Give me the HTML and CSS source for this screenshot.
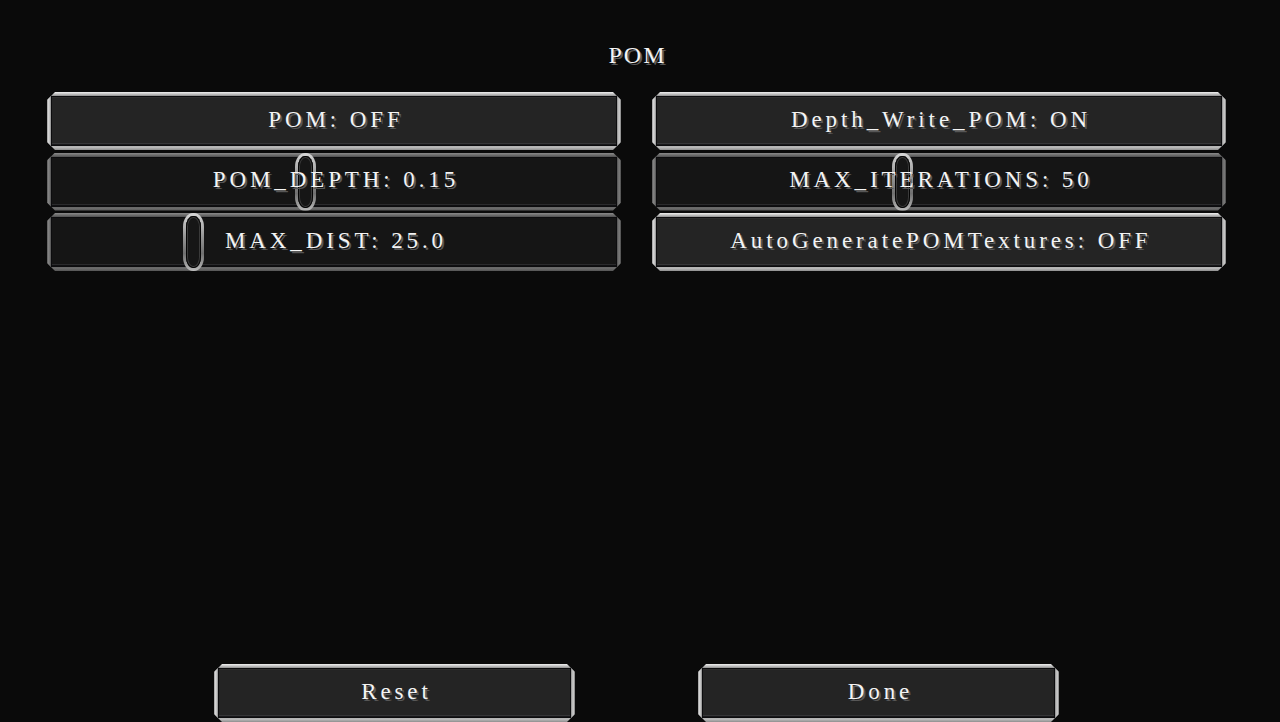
FILE: index.html
```html
<!DOCTYPE html>
<html>
<head>
<meta charset="utf-8">
<link rel="stylesheet" href="styles.css">
</head>
<body>
<div class="screen">
  <h1 class="title">POM</h1>
  <div class="grid">
    <div class="btn"><div class="face"><span class="txt">POM: OFF</span></div></div>
    <div class="btn"><div class="face"><span class="txt">Depth_Write_POM: ON</span></div></div>
    <div class="btn slider"><div class="face"><div class="handle" style="left:248px"><span></span></div><span class="txt">POM_DEPTH: 0.15</span></div></div>
    <div class="btn slider"><div class="face"><div class="handle" style="left:240px"><span></span></div><span class="txt">MAX_ITERATIONS: 50</span></div></div>
    <div class="btn slider"><div class="face"><div class="handle" style="left:136px"><span></span></div><span class="txt">MAX_DIST: 25.0</span></div></div>
    <div class="btn"><div class="face"><span class="txt">AutoGeneratePOMTextures: OFF</span></div></div>
  </div>
  <div class="spacer"></div>
  <div class="bottom">
    <div class="btn wide"><div class="face"><span class="txt">Reset</span></div></div>
    <div class="btn wide"><div class="face"><span class="txt">Done</span></div></div>
  </div>
</div>
</body>
</html>
```

FILE: styles.css
```css
html, body {
  margin: 0;
  padding: 0;
  background: #0a0a0a;
  height: 100%;
  overflow: hidden;
}

.screen {
  width: 1280px;
  height: 722px;
  padding-left: 47px;
  padding-right: 54px;
  box-sizing: border-box;
  display: flex;
  flex-direction: column;
  font-family: "Liberation Serif", "Times New Roman", serif;
  color: #f4f4f4;
}

.title {
  margin: 0;
  padding-top: 40px;
  height: 92px;
  flex: none;
  box-sizing: border-box;
  text-align: center;
  font-size: 24px;
  font-weight: normal;
  line-height: 30px;
  letter-spacing: 2px;
  padding-left: 2px;
  text-shadow: 2px 2px 0 #5c5c5c;
}

.grid {
  display: grid;
  grid-template-columns: 574px 574px;
  column-gap: 31px;
  row-gap: 2.5px;
  grid-auto-rows: 58px;
}

.spacer {
  flex: 1;
}

.bottom {
  display: flex;
  justify-content: center;
  gap: 123px;
  height: 58px;
  flex: none;
}

.btn {
  --c: 8px;
  position: relative;
  height: 58px;
  padding: 4px;
  box-sizing: border-box;
  background: linear-gradient(to bottom, #f0f0f0 0, #c4c4c4 2px, #8e8e8e 4px, #666 50%, #7a7a7a calc(100% - 6px), #c0c0c0 calc(100% - 3px), #8e8e8e 100%);
  clip-path: polygon(var(--c) 0, calc(100% - var(--c)) 0, 100% var(--c), 100% calc(100% - var(--c)), calc(100% - var(--c)) 100%, var(--c) 100%, 0 calc(100% - var(--c)), 0 var(--c));
}

.btn::before,
.btn::after {
  content: "";
  position: absolute;
  top: 0;
  bottom: 0;
  width: 4px;
}

.btn::before {
  left: 0;
  background: linear-gradient(to right, #9a9a9a, #e0e0e0 45%, #8a8a8a);
}

.btn::after {
  right: 0;
  background: linear-gradient(to right, #8a8a8a, #d4d4d4 55%, #7a7a7a);
}

.slider {
  background: linear-gradient(to bottom, #8a8a8a 0, #6e6e6e 2px, #505050 4px, #3e3e3e 50%, #464646 calc(100% - 6px), #707070 calc(100% - 3px), #555 100%);
}

.slider::before {
  background: linear-gradient(to right, #5a5a5a, #8a8a8a 45%, #505050);
}

.slider::after {
  background: linear-gradient(to right, #505050, #808080 55%, #484848);
}

.wide {
  width: 361px;
}

.face {
  height: 100%;
  box-sizing: border-box;
  border: 1px solid #0c0c0e;
  display: flex;
  align-items: center;
  justify-content: center;
  background: #242424;
  box-shadow: inset 0 1px 0 #2c2c2c, inset 0 -1px 0 #18181a, inset 0 -2px 0 #363638;
}

.slider .face {
  background: #151515;
  box-shadow: inset 0 -1px 0 #101012, inset 0 -2px 0 #2a2a2c;
}

.txt {
  position: relative;
  font-size: 23px;
  line-height: 28px;
  letter-spacing: 3.9px;
  padding-left: 3.9px;
  margin-top: -3px;
  text-shadow: 2px 2px 0 #575757;
  white-space: nowrap;
}

.handle {
  position: absolute;
  top: 0;
  bottom: 0;
  width: 21px;
  padding: 3px;
  box-sizing: border-box;
  border-radius: 10px / 14px;
  background: linear-gradient(to bottom, #d8d8d8, #969696 40%, #707070 70%, #bcbcbc);
}

.handle span {
  display: block;
  height: 100%;
  border-radius: 7px / 11px;
  background: #161616;
  box-shadow: inset 0 0 0 1px #050505, inset 0 0 0 2px #3a3a3a;
}
```
